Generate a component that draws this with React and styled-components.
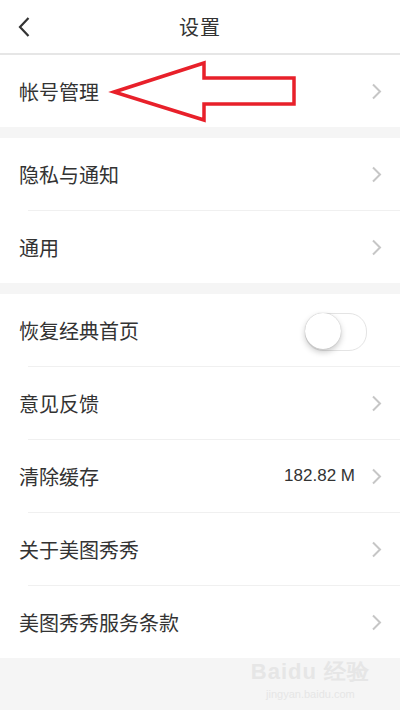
import React from "react";
import styled, { createGlobalStyle } from "styled-components";

const Global = createGlobalStyle`
  html, body {
    margin: 0;
    padding: 0;
    background: #f5f5f5;
  }
  body {
    font-family: "Noto Sans CJK SC", "Noto Sans", sans-serif;
  }
`;

const Page = styled.div`
  position: relative;
  width: 400px;
  height: 710px;
  overflow: hidden;
  background: #f5f5f5;
`;

const Header = styled.div`
  height: 53px;
  background: #fff;
  border-bottom: 2px solid #e6e6e6;
  display: flex;
  align-items: center;
  justify-content: center;
  position: relative;
`;

const BackBtn = styled.div`
  position: absolute;
  left: 17px;
  top: 16px;
  width: 20px;
  height: 22px;
  display: flex;
  align-items: center;
`;

const Title = styled.div`
  font-size: 20px;
  color: #333;
  letter-spacing: 1px;
`;

const Section = styled.div`
  background: #fff;
  margin-bottom: ${(p) => (p.gap ? "11px" : "0")};
`;

const Row = styled.div`
  height: 72px;
  display: flex;
  align-items: center;
  padding: 0 18px 0 19px;
  position: relative;
  & + & {
    margin-top: 1px;
  }
  & + &::before {
    content: "";
    position: absolute;
    left: 28px;
    right: 0;
    top: -1px;
    height: 1px;
    background: #f0f0f0;
  }
`;

const Label = styled.div`
  flex: 1;
  font-size: 20px;
  color: #333;
`;

const Value = styled.div`
  font-family: "Liberation Sans", Arial, sans-serif;
  font-size: 17px;
  color: #333;
  margin-right: 16px;
`;

const Toggle = styled.div`
  width: 60px;
  height: 36px;
  border-radius: 18px;
  border: 1.5px solid #e4e4e4;
  background: #fff;
  position: relative;
  margin-right: 15px;
  margin-top: 4px;
  &::after {
    content: "";
    position: absolute;
    left: -1px;
    top: -1px;
    width: 36px;
    height: 36px;
    border-radius: 50%;
    background: #fff;
    box-shadow: 0 3px 6px rgba(0, 0, 0, 0.22), 0 0 1px rgba(0, 0, 0, 0.3);
  }
`;

const Arrow = styled.svg`
  position: absolute;
  left: 0;
  top: 0;
  pointer-events: none;
`;

const Watermark = styled.div`
  position: absolute;
  right: 30px;
  bottom: 10px;
  text-align: center;
  color: #e6e6e6;
  font-family: "Liberation Sans", Arial, sans-serif;
`;

const WmBig = styled.div`
  font-size: 22px;
  font-weight: bold;
  letter-spacing: 1px;
`;

const WmSmall = styled.div`
  font-size: 11px;
  margin-top: 1px;
`;

const Chevron = () => (
  <svg width="11" height="17" viewBox="0 0 11 17">
    <path d="M2 1.5 L9 8.5 L2 15.5" fill="none" stroke="#c6c6c6" strokeWidth="2" />
  </svg>
);

const Item = ({ label, value, toggle }) => (
  <Row>
    <Label>{label}</Label>
    {value && <Value>{value}</Value>}
    {toggle ? <Toggle /> : <Chevron />}
  </Row>
);

export default function App() {
  return (
    <Page>
      <Global />
      <Header>
        <BackBtn>
          <svg width="14" height="22" viewBox="0 0 14 22">
            <path d="M11.5 2 L3 11 L11.5 20" fill="none" stroke="#333" strokeWidth="2.2" />
          </svg>
        </BackBtn>
        <Title>设置</Title>
      </Header>
      <Section gap>
        <Item label="帐号管理" />
      </Section>
      <Section gap>
        <Item label="隐私与通知" />
        <Item label="通用" />
      </Section>
      <Section>
        <Item label="恢复经典首页" toggle />
        <Item label="意见反馈" />
        <Item label="清除缓存" value="182.82 M" />
        <Item label="关于美图秀秀" />
        <Item label="美图秀秀服务条款" />
      </Section>
      <Watermark>
        <WmBig>Baidu 经验</WmBig>
        <WmSmall>jingyan.baidu.com</WmSmall>
      </Watermark>
      <Arrow width="400" height="710" viewBox="0 0 400 710">
        <polygon
          points="114,92 204,63 204,78 294,78 294,104 204,104 204,120"
          fill="none"
          stroke="#e8202a"
          strokeWidth="3.5"
          strokeLinejoin="miter"
        />
      </Arrow>
    </Page>
  );
}
